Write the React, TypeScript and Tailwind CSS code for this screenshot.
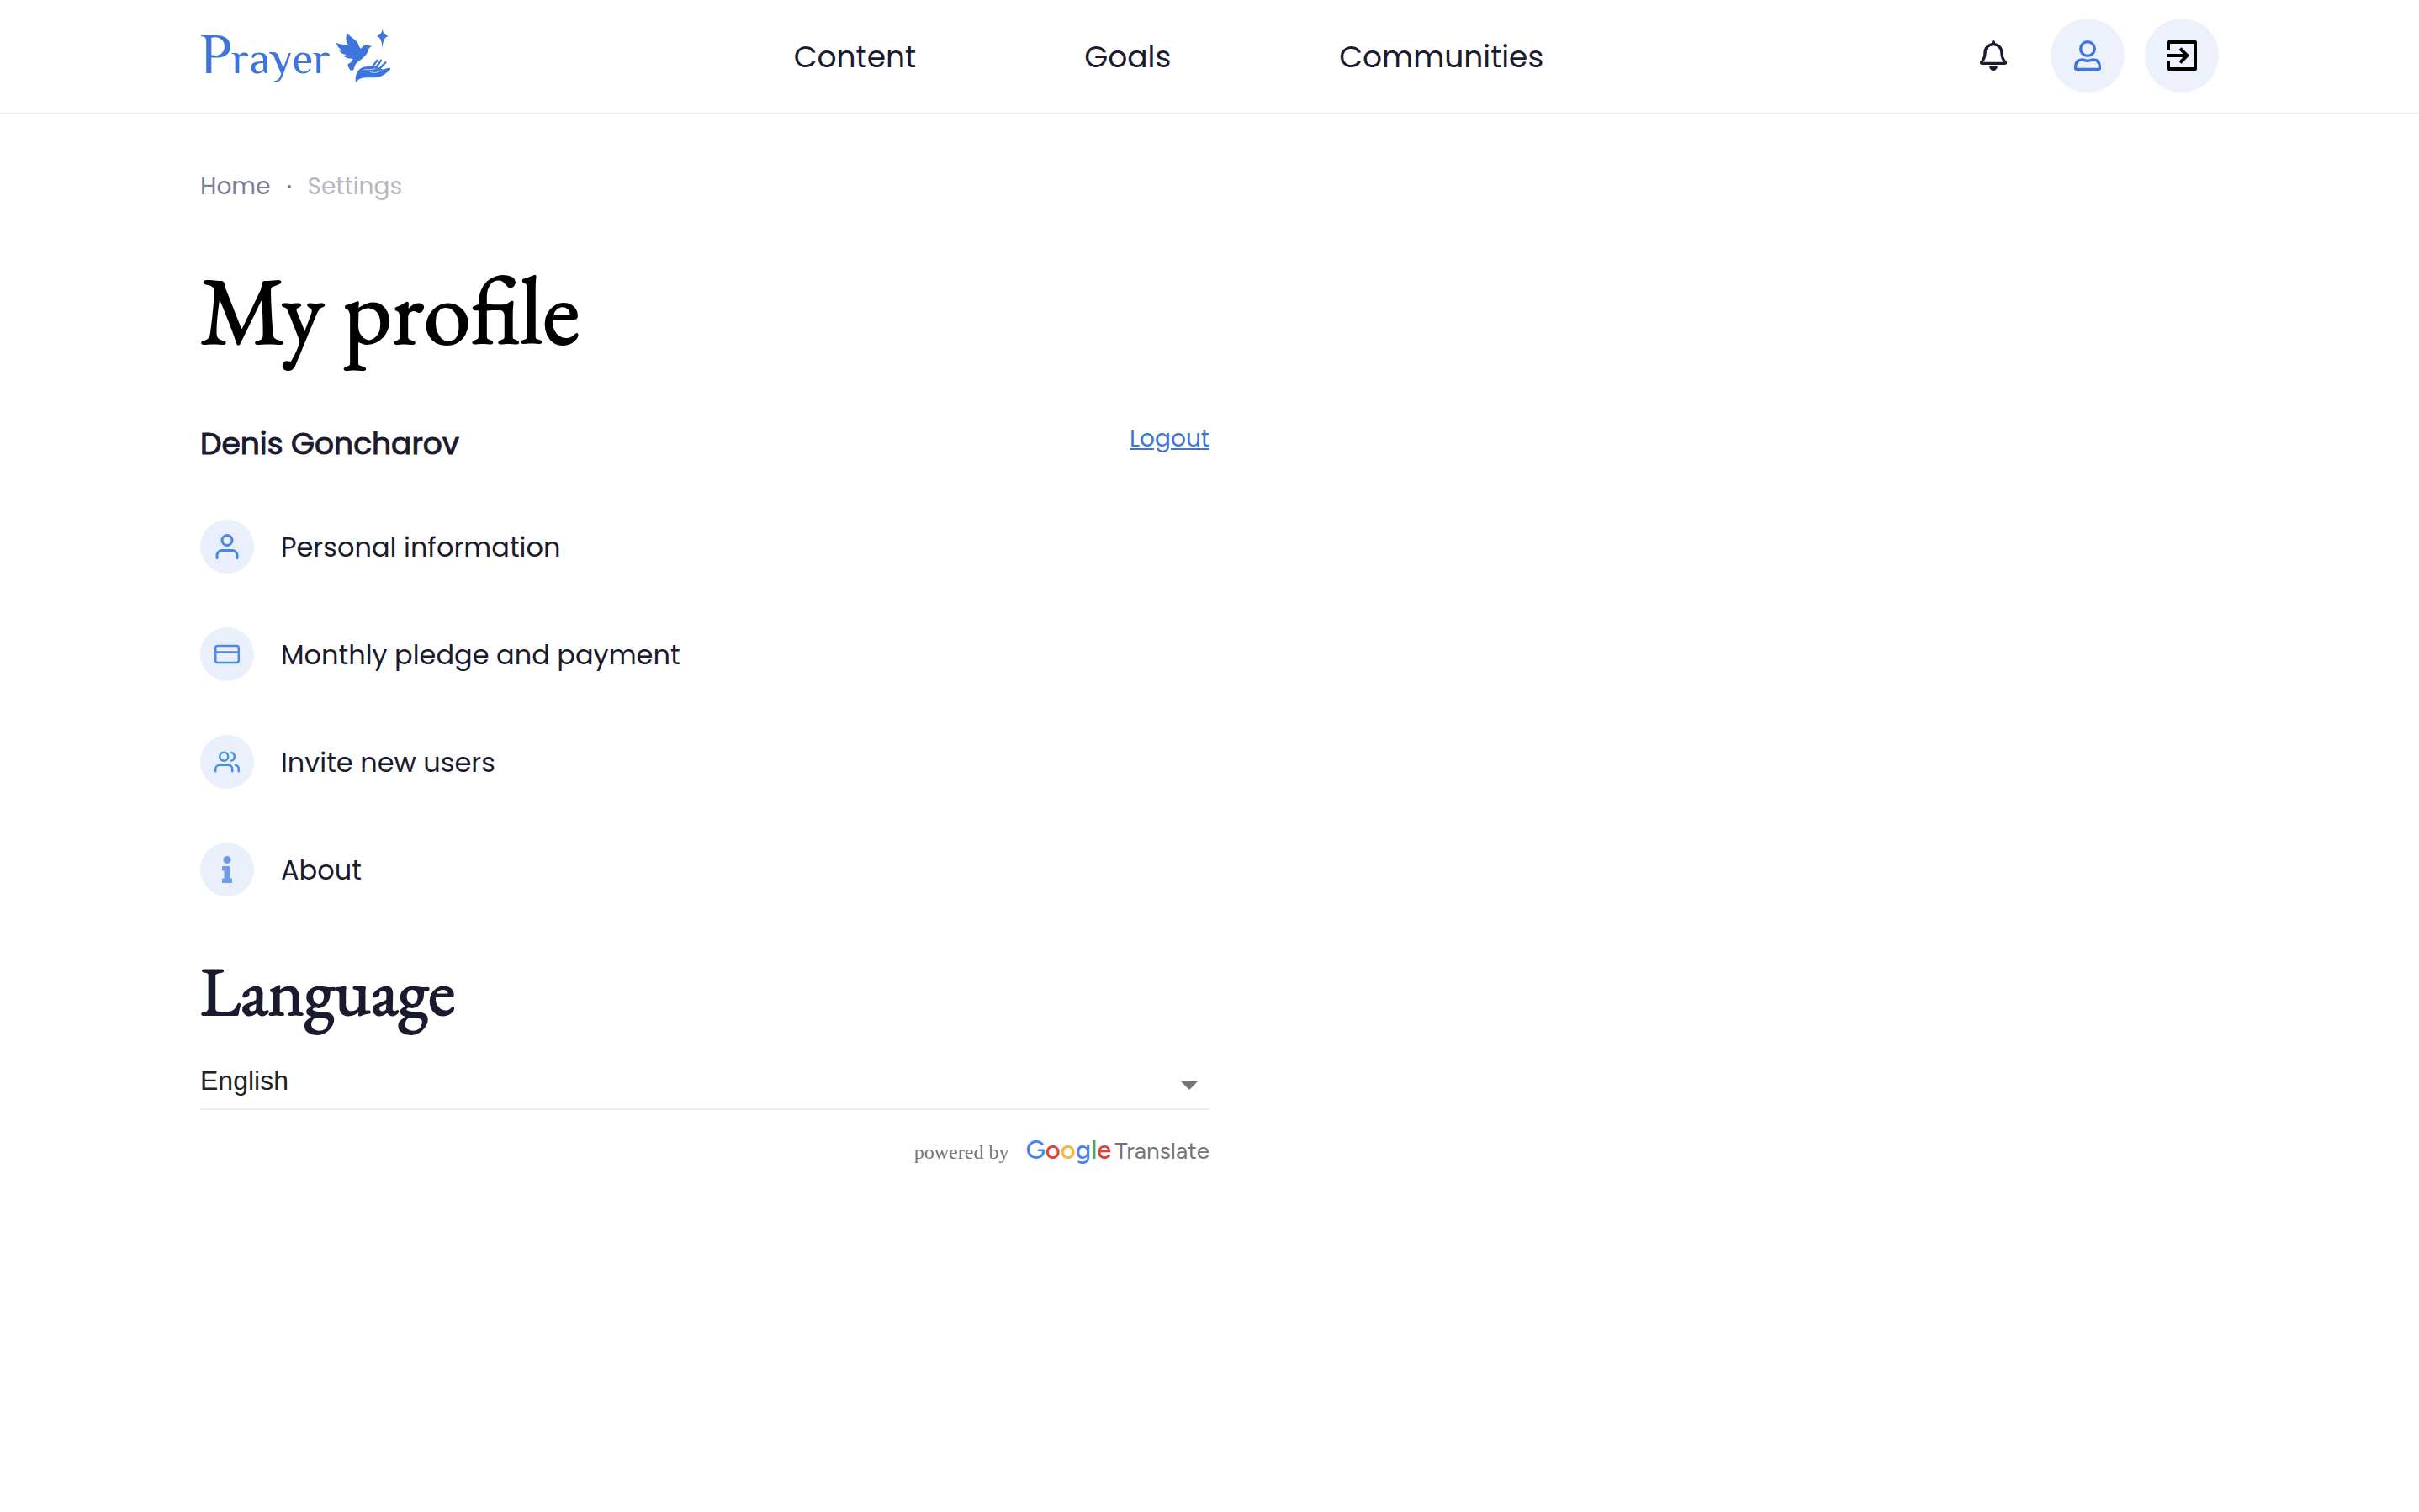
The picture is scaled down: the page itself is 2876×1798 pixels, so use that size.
import React, { useState } from "react";
import { FiCreditCard, FiUser, FiUsers } from "react-icons/fi";
import { FaInfo } from "react-icons/fa";

const navLinks = ["Content", "Goals", "Communities"];

const languages = ["English", "Español", "Français", "Deutsch", "Русский"];

const menuItems = [
  { label: "Personal information", icon: <FiUser className="size-9 text-[#4a86e8]" /> },
  { label: "Monthly pledge and payment", icon: <FiCreditCard className="size-[30px] text-[#4a8be8]" /> },
  { label: "Invite new users", icon: <FiUsers className="size-[30px] text-[#4a90e2]" /> },
  { label: "About", icon: <FaInfo className="size-8 text-[#7099e6]" /> },
];

function DoveMark() {
  return (
    <svg viewBox="12 22 198 198" className="size-[66px]" fill="currentColor" aria-hidden="true">
      <path d="M14 75C28 83 44 80 59 86C47 74 47 56 54 41C63 56 84 63 92 78C95 86 97 93 103 96C110 84 124 79 132 86L142 87C136 90 132 93 129 99C126 118 108 132 92 143C84 149 80 158 77 170C76 176 63 176 62 170C58 162 54 156 56 151C64 148 70 142 74 132C60 133 46 129 38 121C44 121 48 120 51 118C39 117 29 112 25 104C31 105 35 104 38 103C26 98 17 88 14 75Z" />
      <path d="M179 25C181 42 188 50 204 52C188 54 181 62 179 98C177 62 170 54 155 52C170 50 177 42 179 25Z" />
      <path d="M84 217C80 194 88 171 110 163C124 158 142 162 156 160C168 158 172 172 190 172C200 166 207 166 206 171C192 185 182 194 162 198C132 203 100 192 84 217Z" />
      <g fill="none" stroke="currentColor" strokeLinecap="round" strokeWidth="7">
        <path d="M142 162C148 157 155 144 161 138" />
        <path d="M155 164C162 158 168 146 174 138" />
        <path d="M168 168C178 160 184 152 190 146" />
        <path d="M176 178C186 174 194 168 204 169" />
      </g>
      <g fill="none" stroke="#ffffff" strokeLinecap="round" strokeWidth="2">
        <path d="M114 172C128 170 142 172 154 168" />
        <path d="M136 180C150 184 166 182 172 174" />
        <path d="M170 160L162 168" />
      </g>
    </svg>
  );
}

function BellIcon() {
  return (
    <svg viewBox="102 114 96 108" className="h-9 w-8" aria-hidden="true">
      <path
        d="M150 128C130 128 120 143 120 160C120 180 111 187 107 192Q105 196 110 196H190Q195 196 193 192C189 187 180 180 180 160C180 143 170 128 150 128Z"
        fill="none"
        stroke="currentColor"
        strokeWidth="10"
        strokeLinejoin="round"
      />
      <path d="M144 128V120Q144 114 150 114Q156 114 156 120V128ZM135 207H165C163 217 157 222 150 222C143 222 137 217 135 207Z" fill="currentColor" />
    </svg>
  );
}

function AccountIcon() {
  return (
    <svg viewBox="438 114 96 108" className="h-9 w-8" fill="none" stroke="currentColor" strokeWidth="10" strokeLinejoin="round" aria-hidden="true">
      <circle cx="486" cy="144" r="25" />
      <path d="M443 214V208C443 192 452 184 464 183C473 182 477 187 486 187C495 187 499 182 508 183C521 184 529 193 529 208V214Q529 217 526 217H446Q443 217 443 214Z" />
    </svg>
  );
}

function ExitIcon() {
  return (
    <svg viewBox="768 114 108 108" className="size-9" fill="none" stroke="currentColor" strokeWidth="12" aria-hidden="true">
      <path d="M774 150V120H870V216H774V186" strokeLinejoin="round" />
      <path d="M768 168H838M816 143L841 168L816 193" />
    </svg>
  );
}

export default function App() {
  const [language, setLanguage] = useState("English");

  return (
    <div className="bg-white font-[Poppins,Inter,sans-serif] text-[#1b1b2f]">
      <header className="border-b-2 border-[#ebebf2] pb-0.5">
        <div className="mx-auto flex h-[132px] max-w-[2400px] items-center justify-between">
          <a href="#" className="-mr-3 flex items-center gap-1.5 text-[#3e75dc]">
            <span className="font-[Philosopher,serif] text-[52px] leading-[80px]">
              <span className="text-[68px]">P</span>rayer
            </span>
            <DoveMark />
          </a>
          <nav className="flex gap-[200px] pt-1">
            {navLinks.map((link) => (
              <a key={link} href="#" className="text-4xl leading-10">
                {link}
              </a>
            ))}
          </nav>
          <div className="flex gap-6">
            <button type="button" aria-label="Notifications" className="flex size-[88px] items-center justify-center rounded-full">
              <BellIcon />
            </button>
            <button type="button" aria-label="Account" className="flex size-[88px] items-center justify-center rounded-full bg-[#ecf1fb] text-[#3e75dc]">
              <AccountIcon />
            </button>
            <button type="button" aria-label="Sign out" className="flex size-[88px] items-center justify-center rounded-full bg-[#ecf1fb] text-black">
              <ExitIcon />
            </button>
          </div>
        </div>
      </header>

      <main className="mx-auto max-w-[2400px] pt-[66px]">
        <nav aria-label="Breadcrumb" className="flex items-center gap-5 text-[28px] leading-10">
          <a href="#" className="text-[#7c7f95]">Home</a>
          <span className="size-1 rounded-full bg-[#7c7f95]" />
          <span className="text-[#b4b6c0]">Settings</span>
        </nav>

        <h1 className="mt-[70px] font-['EB_Garamond',serif] text-[113px] leading-[112px] text-black [-webkit-text-stroke:2px_currentColor]">
          My profile
        </h1>

        <div className="mt-[76px] w-1/2">
          <div className="flex items-start justify-between">
            <h2 className="text-4xl leading-14 [-webkit-text-stroke:1px_currentColor]">Denis Goncharov</h2>
            <a href="#" className="text-[28px] leading-11 text-[#3e75dc] underline">Logout</a>
          </div>

          <ul className="mt-[62px] flex flex-col gap-16">
            {menuItems.map((item) => (
              <li key={item.label}>
                <a href="#" className="flex items-center gap-8 text-[32px] leading-10">
                  <span className="flex size-16 items-center justify-center rounded-full bg-[#e9f0fb]">{item.icon}</span>
                  <span className="pt-0.5">{item.label}</span>
                </a>
              </li>
            ))}
          </ul>

          <h2 className="mt-[70px] font-['EB_Garamond',serif] text-[82px] leading-[84px] [-webkit-text-stroke:2px_currentColor]">
            <label htmlFor="language">Language</label>
          </h2>

          <div className="relative mt-8">
            <select
              id="language"
              value={language}
              onChange={(event) => setLanguage(event.target.value)}
              className="h-[68px] w-full appearance-none border-b-2 border-[#ebebf2] bg-transparent font-['Liberation_Sans',Arial,sans-serif] text-[32px] text-[#222222]"
            >
              {languages.map((name) => (
                <option key={name}>{name}</option>
              ))}
            </select>
            <svg viewBox="0 0 20 10" className="pointer-events-none absolute top-[34px] right-[14px] h-[10px] w-5" fill="#757575" aria-hidden="true">
              <path d="M0 0H20L10 10Z" />
            </svg>
          </div>

          <div className="mt-7 flex items-baseline justify-end gap-5 text-[#757575]">
            <span className="font-['Liberation_Serif',serif] text-2xl">powered by</span>
            <a href="#" className="flex items-baseline gap-1">
              <span className="font-[Figtree,Lato,sans-serif] text-[31px] leading-10 font-medium">
                <span className="text-[#4285f4]">G</span>
                <span className="text-[#db4437]">o</span>
                <span className="text-[#f4b932]">o</span>
                <span className="text-[#4285f4]">g</span>
                <span className="text-[#4ba55b]">l</span>
                <span className="text-[#db4437]">e</span>
              </span>
              <span className="font-[Figtree,Roboto,sans-serif] text-[28px] leading-10">Translate</span>
            </a>
          </div>
        </div>
      </main>
    </div>
  );
}
